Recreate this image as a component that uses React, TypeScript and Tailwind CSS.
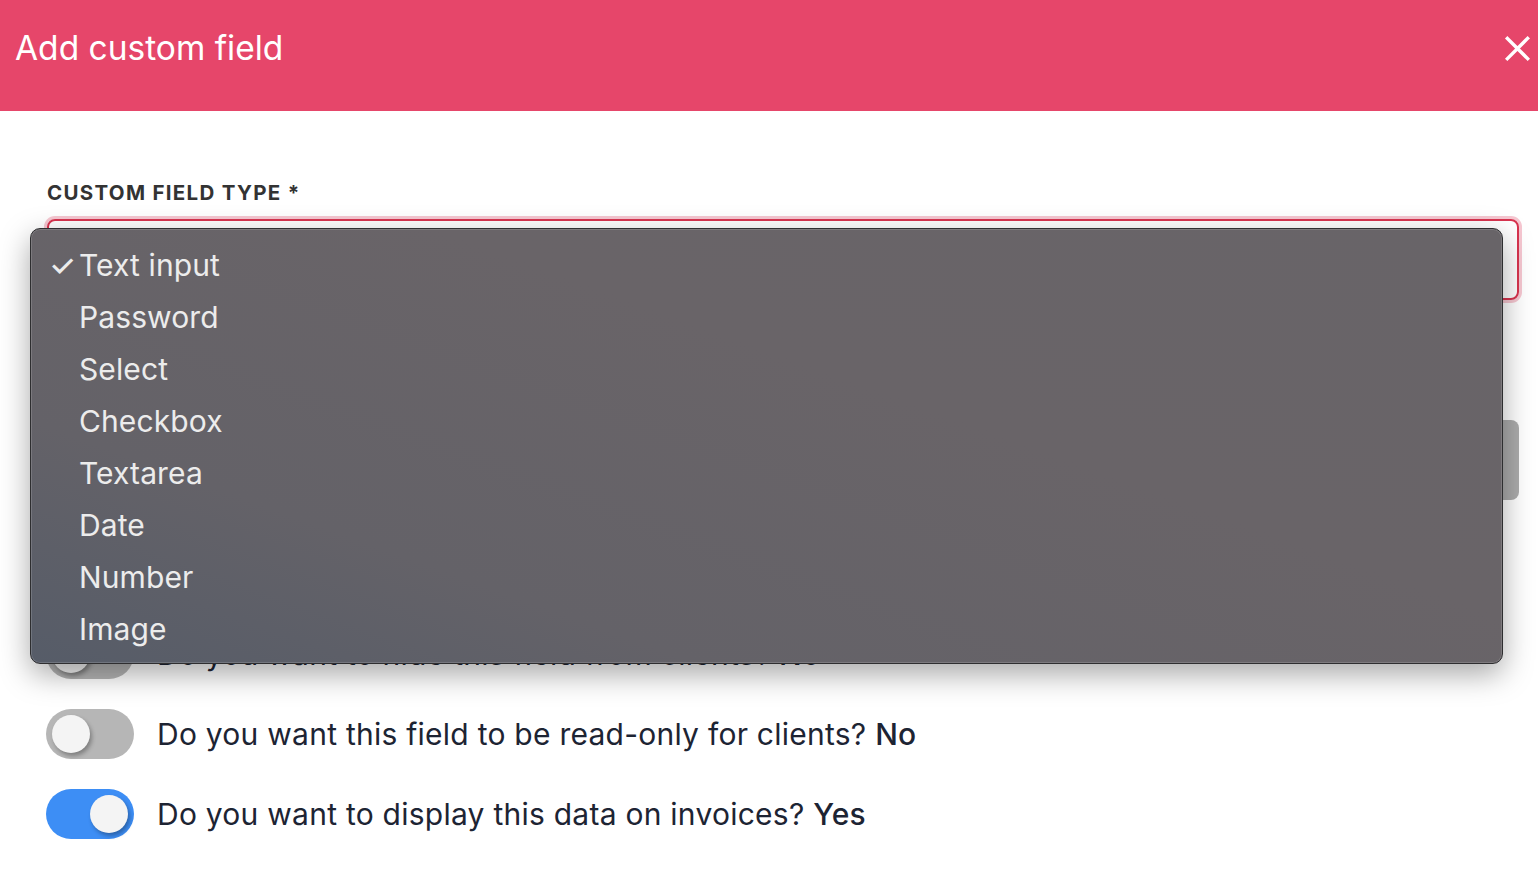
import React from "react";

const options = ["Text input", "Password", "Select", "Checkbox", "Textarea", "Date", "Number", "Image"];

function Toggle({ on }: { on: boolean }) {
  return (
    <div
      className={
        "relative w-[88px] h-[50px] rounded-full shrink-0 flex items-center px-[6px] " +
        (on ? "bg-[#3d8ef5] justify-end" : "bg-[#b6b6b6] justify-start")
      }
    >
      <div className="w-[38px] h-[38px] rounded-full bg-[#f4f4f4] shadow-[2px_3px_4px_rgba(0,0,0,0.3)]" />
    </div>
  );
}

function ToggleRow({ on, text, answer }: { on: boolean; text: string; answer: string }) {
  return (
    <div className="flex items-center gap-[23px] h-[50px]">
      <Toggle on={on} />
      <p className="text-[30px] text-[#1d2433] tracking-[0.25px]">
        {text} <span className="font-medium">{answer}</span>
      </p>
    </div>
  );
}

export default function App() {
  return (
    <div className="relative min-h-screen bg-white font-['Inter',sans-serif] overflow-hidden">
      {/* Header */}
      <header className="h-[111px] bg-[#e6466a] flex items-center justify-between pl-[15px] pr-[7px]">
        <h1 className="text-[33.5px] text-white font-normal -mt-[14px]">Add custom field</h1>
        <button className="w-[27px] h-[27px] -mt-[14px]" aria-label="close">
          <svg viewBox="0 0 24 24" className="w-full h-full" fill="none" stroke="white" strokeWidth="3" strokeLinecap="square">
            <path d="M3 3L21 21M21 3L3 21" />
          </svg>
        </button>
      </header>

      {/* Form */}
      <main className="pl-[46px] pr-[19px] pt-[70px]">
        <label className="block ml-[1px] text-[20.5px] font-bold tracking-[1.3px] text-[#333] leading-[24px]">
          CUSTOM FIELD TYPE *
        </label>
        <div className="mt-[14px] ml-[1px] h-[81px] rounded-[8px] border-2 border-[#d8344f] shadow-[0_0_0_3px_#f6c7d1]" />

        <div className="mt-[120px] flex h-[80px] gap-0">
          <div className="flex-1 rounded-l-[8px] border border-[#e5e5e5]" />
          <div className="w-[120px] rounded-r-[8px] bg-[#acacac]" />
        </div>

        <div className="mt-[129px] flex flex-col gap-[30px]">
          <ToggleRow on={false} text="Do you want to hide this field from clients?" answer="No" />
          <ToggleRow on={false} text="Do you want this field to be read-only for clients?" answer="No" />
          <ToggleRow on={true} text="Do you want to display this data on invoices?" answer="Yes" />
        </div>
      </main>

      {/* Open select menu */}
      <div className="absolute left-[30px] top-[228px] w-[1473px] h-[436px] rounded-[10px] border border-[#2e2e30] bg-[linear-gradient(20deg,#565c68_0%,#646268_25%,#696468_60%,#686468_100%)] shadow-[0_10px_30px_rgba(0,0,0,0.35)] ring-1 ring-inset ring-white/15 pt-[10px]">
        {options.map((o, i) => (
          <div key={o} className="h-[52px] flex items-center text-[30px] text-[#ececec] tracking-[0.1px]">
            <span className="w-[48px] pl-[18px] text-[30px] font-medium">{i === 0 ? "✓" : ""}</span>
            {o}
          </div>
        ))}
      </div>
    </div>
  );
}
